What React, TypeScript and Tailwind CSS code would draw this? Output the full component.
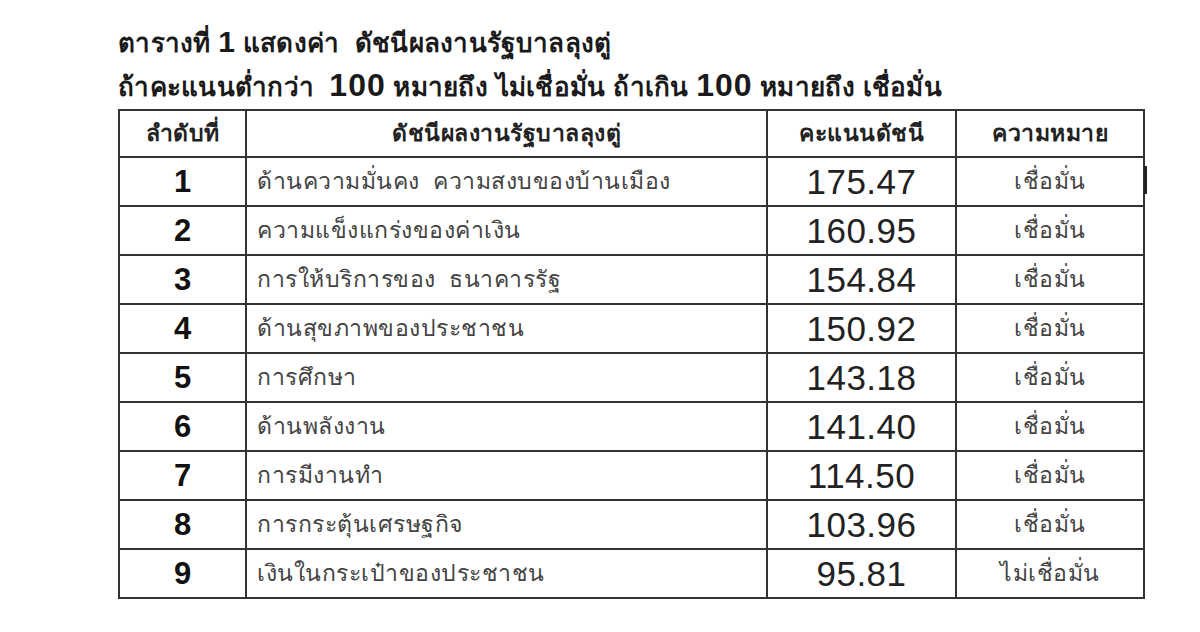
const rows: [number, string, string, string][] = [
  [1, 'ด้านความมั่นคง  ความสงบของบ้านเมือง', '175.47', 'เชื่อมั่น'],
  [2, 'ความแข็งแกร่งของค่าเงิน', '160.95', 'เชื่อมั่น'],
  [3, 'การให้บริการของ  ธนาคารรัฐ', '154.84', 'เชื่อมั่น'],
  [4, 'ด้านสุขภาพของประชาชน', '150.92', 'เชื่อมั่น'],
  [5, 'การศึกษา', '143.18', 'เชื่อมั่น'],
  [6, 'ด้านพลังงาน', '141.40', 'เชื่อมั่น'],
  [7, 'การมีงานทำ', '114.50', 'เชื่อมั่น'],
  [8, 'การกระตุ้นเศรษฐกิจ', '103.96', 'เชื่อมั่น'],
  [9, 'เงินในกระเป๋าของประชาชน', '95.81', 'ไม่เชื่อมั่น'],
]

export default function App() {
  return (
    <div className="w-[1200px] h-[632px] bg-white overflow-hidden font-['Liberation_Sans','Noto_Sans',sans-serif] text-[#1a1a1a]">
      <div className="pl-[118px] pt-[22px]">
        <h1 className="font-bold text-[26px] leading-[40px] tracking-[0.3px] whitespace-pre">
          ตารางที่ <span className="text-[30px]">1</span> แสดงค่า  ดัชนีผลงานรัฐบาลลุงตู่
        </h1>
        <p className="font-bold text-[26px] leading-[44px] tracking-[0.3px] whitespace-pre">
          ถ้าคะแนนต่ำกว่า  <span className="text-[32px] tracking-[1px]">100</span> หมายถึง ไม่เชื่อมั่น ถ้าเกิน{' '}
          <span className="text-[32px] tracking-[1px]">100</span> หมายถึง เชื่อมั่น
        </p>
      </div>

      <table className="ml-[118px] mt-[0px] w-[1025px] border-collapse border-2 border-[#333] table-fixed leading-none">
        <colgroup>
          <col className="w-[127px]" />
          <col className="w-[521px]" />
          <col className="w-[189px]" />
          <col className="w-[188px]" />
        </colgroup>
        <thead>
          <tr className="h-[47px]">
            <th className="border-2 border-[#333] font-bold text-[23px] text-[#222] tracking-[0.5px]">ลำดับที่</th>
            <th className="border-2 border-[#333] font-bold text-[23px] text-[#222] tracking-[0.5px]">ดัชนีผลงานรัฐบาลลุงตู่</th>
            <th className="border-2 border-[#333] font-bold text-[23px] text-[#222] tracking-[0.5px]">คะแนนดัชนี</th>
            <th className="border-2 border-[#333] font-bold text-[23px] text-[#222] tracking-[0.5px]">ความหมาย</th>
          </tr>
        </thead>
        <tbody>
          {rows.map(([n, name, score, meaning]) => (
            <tr key={n} className="h-[49px]">
              <td className="border-2 border-[#333] p-0 text-center font-bold text-[31px] text-[#111]">{n}</td>
              <td className="border-2 border-[#333] p-0 pl-[10px] text-[23px] text-[#444] tracking-[0.5px] whitespace-pre">{name}</td>
              <td className="border-2 border-[#333] p-0 text-center text-[35px] text-[#222] tracking-[0.5px]">{score}</td>
              <td className="relative border-2 border-[#333] p-0 text-center text-[23px] text-[#444] tracking-[0.5px]">
                {meaning}
                {n === 1 && <span className="absolute right-[-4px] top-[8px] w-[3px] h-[28px] bg-[#222]" />}
              </td>
            </tr>
          ))}
        </tbody>
      </table>
    </div>
  )
}
